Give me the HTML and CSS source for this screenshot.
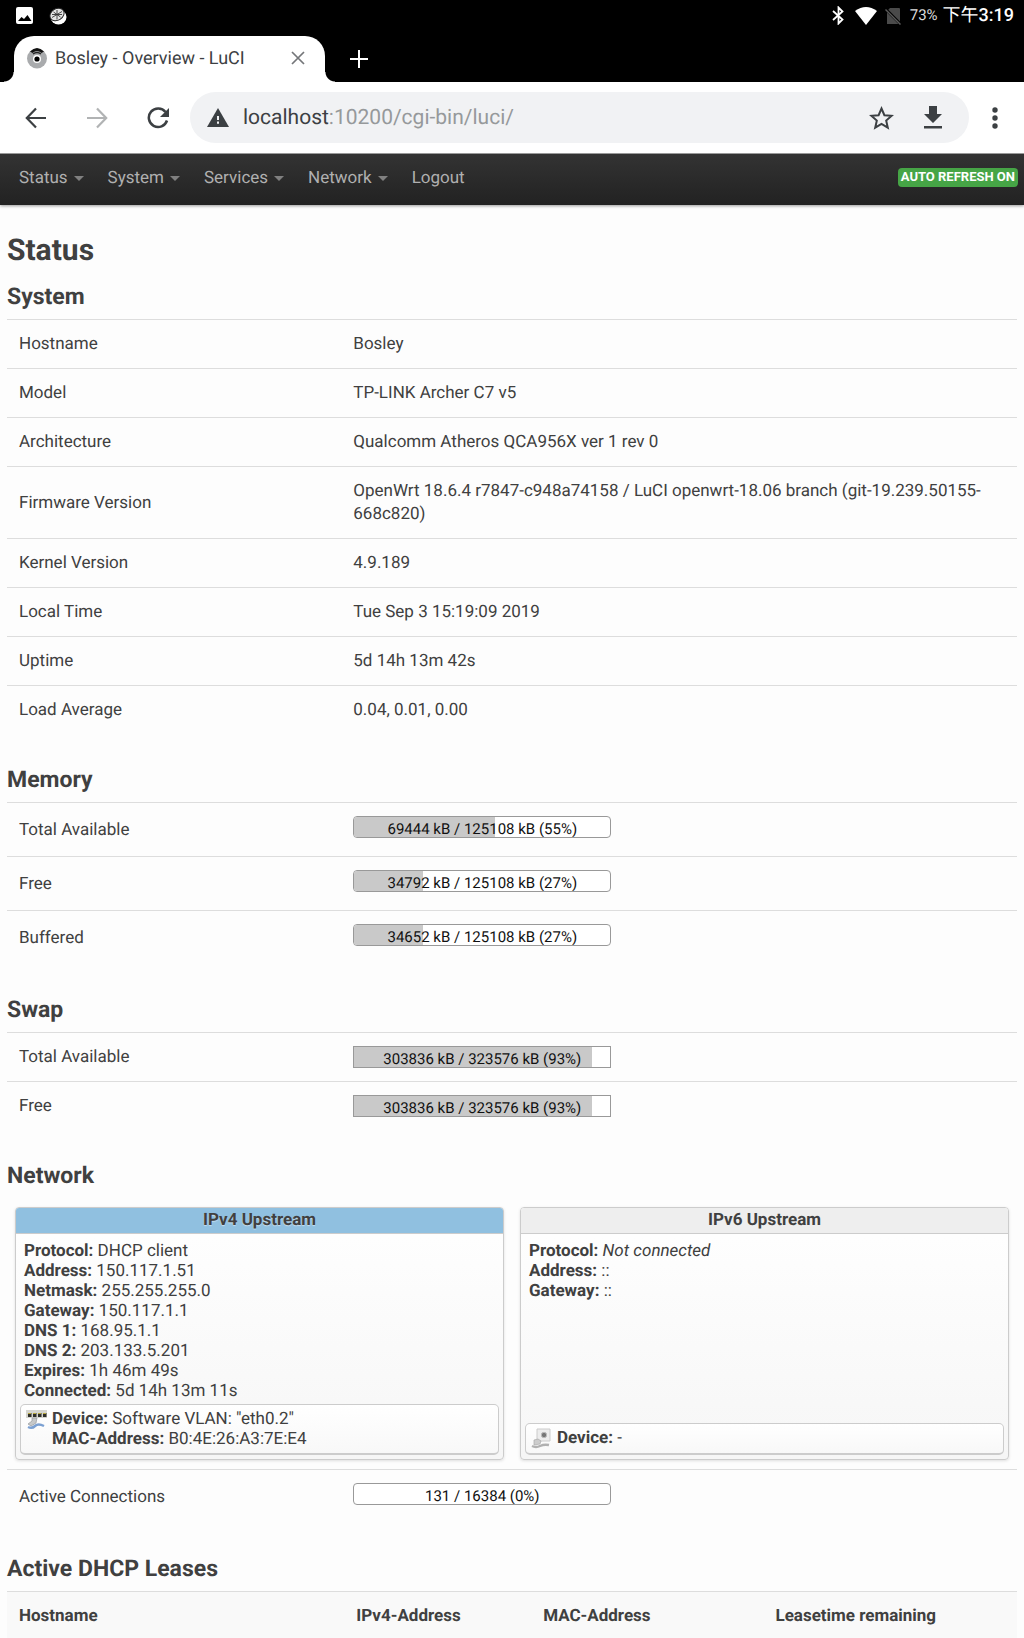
FILE: index.html
```html
<!DOCTYPE html>
<html lang="en">
<head>
<meta charset="utf-8">
<meta name="viewport" content="width=device-width, initial-scale=1">
<title>Bosley - Overview - LuCI</title>
<link rel="stylesheet" href="styles.css">
</head>
<body>
<div class="status-bar">
  <div class="status-group">
    <svg width="17" height="17" viewBox="0 0 17 17" aria-hidden="true"><rect width="17" height="17" rx="2" fill="#fff"/><path d="M2 14l3.500-4 2.500 2 3.500-4 4 6z" fill="#000"/></svg>
    <svg width="18" height="18" viewBox="0 0 18 18" aria-hidden="true"><ellipse cx="9.500" cy="10" rx="8" ry="7.500" fill="#fff"/><ellipse cx="8" cy="7.500" rx="7.500" ry="5.800" transform="rotate(-32 8 7.500)" fill="#e4e4e4" stroke="#222" stroke-width="1"/><path d="M3 10.500l10-6M4.500 5l7 5M8 3v9.500M3 7.500h10" stroke="#333" stroke-width=".9"/></svg>
  </div>
  <div class="status-group status-right">
    <svg width="12" height="19" viewBox="0 0 12 19" fill="none" stroke="#fff" stroke-width="1.800" aria-hidden="true"><path d="M1 5l9.500 8.500L6.500 17.500V1.500l4 4L1 14"/></svg>
    <svg class="wifi" width="22" height="18" viewBox="0 0 22 18" aria-hidden="true"><path d="M0 4Q11-4 22 4L11 18z" fill="#fff"/></svg>
    <svg class="sim" width="17" height="18" viewBox="0 0 17 18" aria-hidden="true"><path d="M5 1h9q1 0 1 1v15H2V4z" fill="#4a4a4a"/><path d="M0 1.500l16 16" stroke="#000" stroke-width="3"/><path d="M.5 2.500l15 15" stroke="#5a5a5a" stroke-width="1.500"/></svg>
    <span class="battery">73%</span>
    <span class="clock">下午<b>3:19</b></span>
  </div>
</div>

<div class="tab-strip">
  <div class="tab">
    <svg width="20" height="22" viewBox="0 0 20 22" aria-hidden="true"><circle cx="10" cy="11.500" r="10" fill="#a9abad"/><path d="M3 4.500Q10-2.500 17 4.500L14.500 6Q10 2 5.500 6z" fill="#111"/><path d="M6 7Q10 4 14 7" stroke="#222" stroke-width="1.500" fill="none"/><circle cx="10" cy="12" r="4" fill="#fff"/><circle cx="10" cy="12" r="2.600" fill="#000"/></svg>
    <span class="tab-title">Bosley - Overview - LuCI</span>
    <button class="icon-button" aria-label="Close tab"><svg width="14" height="14" viewBox="0 0 14 14" stroke="#747679" stroke-width="1.700"><path d="M1 1l12 12M13 1L1 13"/></svg></button>
  </div>
  <button class="icon-button new-tab" aria-label="New tab"><svg width="18" height="18" viewBox="0 0 18 18" stroke="#fff" stroke-width="2"><path d="M9 0v18M0 9h18"/></svg></button>
</div>

<div class="toolbar">
  <button class="icon-button" aria-label="Back"><svg width="22" height="22" viewBox="0 0 22 22" fill="none" stroke="#3c4043" stroke-width="2.200"><path d="M21 11H2M11 1.500L1.800 11l9.200 9.500"/></svg></button>
  <button class="icon-button" aria-label="Forward" disabled><svg width="22" height="22" viewBox="0 0 22 22" fill="none" stroke="#b1b3b4" stroke-width="2.200"><path d="M1 11h19M11 1.500l9.200 9.500-9.200 9.500"/></svg></button>
  <button class="icon-button" aria-label="Reload"><svg width="22" height="22" viewBox="0 0 22 22"><path d="M18.500 5A9.300 9.300 0 1 0 20 13.500" fill="none" stroke="#3c4043" stroke-width="2.500"/><path d="M22 1v9h-9z" fill="#3c4043"/></svg></button>
  <div class="address-bar">
    <svg width="22" height="20" viewBox="0 0 22 20" aria-hidden="true"><path d="M11 0l11 19H0z" fill="#3c4043"/><path d="M11 8v4M11 13.500v2.200" stroke="#f1f2f4" stroke-width="2"/></svg>
    <span class="url" role="textbox" tabindex="0" aria-label="Address">localhost<span class="url-path">:10200/cgi-bin/luci/</span></span>
    <button class="icon-button" aria-label="Bookmark"><svg width="25" height="24" viewBox="0 0 25 24" fill="none" stroke="#3c4043" stroke-width="2"><path d="M12.500 2.500l2.900 6.700 7.300.6-5.500 4.800 1.600 7.100-6.300-3.800-6.300 3.800 1.600-7.100-5.500-4.800 7.300-.6z"/></svg></button>
    <button class="icon-button download" aria-label="Download"><svg width="18" height="23" viewBox="0 0 18 23" fill="#3c4043"><path d="M5 0h8v8h5l-9 9-9-9h5zM0 20h18v2.500H0z"/></svg></button>
  </div>
  <button class="icon-button" aria-label="More options"><svg width="6" height="22" viewBox="0 0 6 22" fill="#3c4043"><circle cx="3" cy="3" r="2.700"/><circle cx="3" cy="11" r="2.700"/><circle cx="3" cy="19" r="2.700"/></svg></button>
</div>

<div class="page">
  <header class="site-header">
    <nav class="menu">
      <a class="has-menu" href="#">Status</a>
      <a class="has-menu" href="#">System</a>
      <a class="has-menu" href="#">Services</a>
      <a class="has-menu" href="#">Network</a>
      <a href="#">Logout</a>
    </nav>
    <button class="refresh-badge">AUTO REFRESH ON</button>
  </header>

  <main class="content">
    <h1>Status</h1>

    <section>
      <h2>System</h2>
      <table class="info">
        <tr><th scope="row">Hostname</th><td>Bosley</td></tr>
        <tr><th scope="row">Model</th><td>TP-LINK Archer C7 v5</td></tr>
        <tr><th scope="row">Architecture</th><td>Qualcomm Atheros QCA956X ver 1 rev 0</td></tr>
        <tr><th scope="row">Firmware Version</th><td>OpenWrt 18.6.4 r7847-c948a74158 / LuCI openwrt-18.06 branch (git-19.239.50155-668c820)</td></tr>
        <tr><th scope="row">Kernel Version</th><td>4.9.189</td></tr>
        <tr><th scope="row">Local Time</th><td>Tue Sep 3 15:19:09 2019</td></tr>
        <tr><th scope="row">Uptime</th><td>5d 14h 13m 42s</td></tr>
        <tr><th scope="row">Load Average</th><td>0.04, 0.01, 0.00</td></tr>
      </table>
    </section>

    <section>
      <h2>Memory</h2>
      <table class="info roomy">
        <tr><th scope="row">Total Available</th><td><div class="bar"><div class="bar-fill" style="width:55%"></div><span class="bar-text">69444 kB / 125108 kB (55%)</span></div></td></tr>
        <tr><th scope="row">Free</th><td><div class="bar"><div class="bar-fill" style="width:27%"></div><span class="bar-text">34792 kB / 125108 kB (27%)</span></div></td></tr>
        <tr><th scope="row">Buffered</th><td><div class="bar"><div class="bar-fill" style="width:27%"></div><span class="bar-text">34652 kB / 125108 kB (27%)</span></div></td></tr>
      </table>
    </section>

    <section>
      <h2>Swap</h2>
      <table class="info swap">
        <tr><th scope="row">Total Available</th><td><div class="bar"><div class="bar-fill" style="width:93%"></div><span class="bar-text">303836 kB / 323576 kB (93%)</span></div></td></tr>
        <tr><th scope="row">Free</th><td><div class="bar"><div class="bar-fill" style="width:93%"></div><span class="bar-text">303836 kB / 323576 kB (93%)</span></div></td></tr>
      </table>
    </section>

    <section>
      <h2>Network</h2>
      <div class="upstreams">
        <article class="upstream active">
          <h3>IPv4 Upstream</h3>
          <div class="details">
            <div><b>Protocol:</b> DHCP client</div>
            <div><b>Address:</b> 150.117.1.51</div>
            <div><b>Netmask:</b> 255.255.255.0</div>
            <div><b>Gateway:</b> 150.117.1.1</div>
            <div><b>DNS 1:</b> 168.95.1.1</div>
            <div><b>DNS 2:</b> 203.133.5.201</div>
            <div><b>Expires:</b> 1h 46m 49s</div>
            <div><b>Connected:</b> 5d 14h 13m 11s</div>
          </div>
          <div class="device">
            <svg width="21" height="21" viewBox="0 0 21 21" aria-hidden="true"><path d="M0 1h21v8H0z" fill="#d5d5cf"/><path d="M2 4h3.500v4H2zM7 4h3.500v4H7zM12 4h3.500v4H12zM17 4h3.500v4H17z" fill="#30302a"/><path d="M2 4.500h3M7 4.500h3M12 4.500h3M17 4.500h3" stroke="#b7a63c" stroke-width="1.200"/><path d="M6 9h5l-1 5-5 3-3-2 4-3z" fill="#c6c8c9" stroke="#96999b" stroke-width=".7"/><path d="M2 18q4 2 7-1t9 0" fill="none" stroke="#7ba0d2" stroke-width="2.500"/></svg>
            <div>
              <div><b>Device:</b> Software VLAN: "eth0.2"</div>
              <div><b>MAC-Address:</b> B0:4E:26:A3:7E:E4</div>
            </div>
          </div>
        </article>
        <article class="upstream">
          <h3>IPv6 Upstream</h3>
          <div class="details">
            <div><b>Protocol:</b> <em>Not connected</em></div>
            <div><b>Address:</b> ::</div>
            <div><b>Gateway:</b> ::</div>
          </div>
          <div class="device">
            <svg width="21" height="21" viewBox="0 0 21 21" aria-hidden="true"><path d="M6 1h13v12H6z" fill="#ededed" stroke="#ccc"/><circle cx="13" cy="7" r="2.700" fill="#777" stroke="#bbb"/><path d="M3 12l4-1 3 2-1 3-6 1z" fill="#ccc" stroke="#aaa" stroke-width=".7"/><path d="M1 18q4 2 8 0t9-1" fill="none" stroke="#b0b0b0" stroke-width="2.500"/></svg>
            <div><b>Device:</b> -</div>
          </div>
        </article>
      </div>
      <table class="info roomy">
        <tr><th scope="row">Active Connections</th><td><div class="bar"><div class="bar-fill" style="width:0%"></div><span class="bar-text">131 / 16384 (0%)</span></div></td></tr>
      </table>
    </section>

    <section>
      <h2>Active DHCP Leases</h2>
      <table class="leases">
        <thead><tr><th scope="col">Hostname</th><th scope="col">IPv4-Address</th><th scope="col">MAC-Address</th><th scope="col">Leasetime remaining</th></tr></thead>
      </table>
    </section>
  </main>
</div>
</body>
</html>
```

FILE: styles.css
```css
* { box-sizing: border-box; }

body {
  margin: 0;
  height: 100vh;
  display: flex;
  flex-direction: column;
  font: 17px/23px Roboto, "Noto Sans CJK TC", sans-serif;
  text-rendering: geometricPrecision;
  color: #404040;
  background: #fdfdfd;
}

svg { display: block; flex: none; }

.icon-button {
  display: flex;
  padding: 0;
  border: 0;
  background: none;
}

/* Device status bar */
.status-bar {
  display: flex;
  justify-content: space-between;
  align-items: center;
  height: 31px;
  flex: none;
  padding: 0 10px 0 16px;
  background: #000;
  color: #fff;
}
.status-group { display: flex; align-items: center; gap: 16px; }
.status-right { gap: 8px; }
.wifi { margin-left: 3px; }
.battery { font-size: 15px; color: #ddd; }
.clock { font-size: 18px; margin-left: -3px; }
.clock b { font-weight: 500; }

/* Tabs */
.tab-strip {
  display: flex;
  align-items: center;
  flex: none;
  height: 51px;
  padding: 5px 14px 0;
  background: #000;
}
.tab {
  position: relative;
  display: flex;
  align-items: center;
  gap: 8px;
  width: 311px;
  height: 46px;
  padding: 0 20px 2px 13px;
  border-radius: 20px 20px 0 0;
  background: #fff;
}
.tab::before,
.tab::after {
  content: "";
  position: absolute;
  bottom: 0;
  width: 10px;
  height: 10px;
}
.tab::before { right: 100%; background: radial-gradient(circle at 0 0, #000 9px, #fff 10px); }
.tab::after { left: 100%; background: radial-gradient(circle at 100% 0, #000 9px, #fff 10px); }
.tab-title { flex: 1; font-size: 18px; color: #3c4043; }
.new-tab { margin-left: 25px; }

/* Browser toolbar */
.toolbar {
  display: flex;
  align-items: center;
  flex: none;
  gap: 39px;
  height: 72px;
  padding: 0 26px 0 25px;
  border-bottom: 1px solid #999;
  background: #fff;
}
.address-bar {
  display: flex;
  align-items: center;
  flex: 1;
  height: 51px;
  margin: 0 -16px 0 -18px;
  padding: 0 27px 0 17px;
  border-radius: 26px;
  background: #f1f2f4;
}
.url { flex: 1; margin-left: 14px; font-size: 21px; line-height: 28px; color: #3c4043; }
.url-path { color: #96999b; }
.download { margin-left: 30px; }

/* Router page */
.page { flex: 1; min-height: 0; overflow-y: auto; scrollbar-width: none; }
.site-header {
  display: flex;
  justify-content: space-between;
  align-items: center;
  height: 51px;
  padding: 0 6px 2px 7px;
  background: linear-gradient(#333, #222);
  box-shadow: 0 1px 3px rgba(0, 0, 0, .4);
}
.menu { display: flex; }
.menu a {
  display: flex;
  align-items: center;
  gap: 6px;
  padding: 0 12px;
  color: #b0b0b0;
  text-decoration: none;
}
.has-menu::after {
  content: "";
  border: 5px solid transparent;
  border-top-color: #808080;
  border-bottom: 0;
}
.refresh-badge {
  padding: 0 3px 1px;
  margin-bottom: 2px;
  border: 0;
  border-radius: 4px;
  background: #46a546;
  color: #fff;
  font: bold 13px/18px Roboto, sans-serif;
}

.content { padding: 22px 7px 0; }
h1 { margin: 0; font-size: 30px; line-height: 48px; }
h2 { margin: 0; font-size: 23px; line-height: 44px; }
section + section { margin-top: 24px; }

table { width: 100%; border-collapse: separate; border-spacing: 0; }
th { text-align: left; }
.info th,
.info td {
  padding: 13px 12px 12px;
  border-top: 1px solid #ddd;
  vertical-align: middle;
}
.info th { width: 33%; font-weight: normal; }
.info td { padding-left: 13px; }
.info.roomy td { padding-bottom: 18px; }
.swap td { vertical-align: top; }

.bar {
  position: relative;
  width: 258px;
  height: 22px;
  border: 1px solid #999;
  border-radius: 4px;
  background: #fff;
  overflow: hidden;
}
.swap .bar { border-radius: 0; }
.bar-fill { height: 100%; background: #c9c9c9; }
.bar-text {
  position: absolute;
  inset: 1px 0 0;
  text-align: center;
  font-size: 15px;
  line-height: 22px;
  color: #111;
}

/* Upstream cards */
.upstreams {
  display: grid;
  grid-template-columns: 1fr 1fr;
  gap: 16px;
  padding: 9px 8px;
  line-height: 20px;
}
.upstream {
  display: flex;
  flex-direction: column;
  border: 1px solid #ccc;
  border-radius: 4px;
  background: linear-gradient(#fff, #f6f6f6);
  box-shadow: 0 1px 3px rgba(0, 0, 0, .12);
}
.upstream h3 {
  margin: 0;
  padding: 2px 0 3px;
  border-bottom: 1px solid #ccc;
  border-radius: 3px 3px 0 0;
  background: #eee;
  font-size: 17px;
  line-height: 20px;
  text-align: center;
}
.active h3 { background: #90c0e0; text-shadow: 0 1px 1px rgba(255, 255, 255, .5); }
.details { flex: 1; padding: 7px 8px 3px; }
.device {
  display: flex;
  gap: 5px;
  margin: 0 4px 4px;
  padding: 4px 5px;
  border: 1px solid #ccc;
  border-bottom-width: 2px;
  border-radius: 5px;
  background: linear-gradient(#fff, #f8f8f8);
}

.leases th { padding: 13px 12px 12px; border-top: 1px solid #ddd; background: #f9f9f9; }
.leases th + th { padding-left: 16px; }
.leases th:nth-child(1) { width: 33%; }
.leases th:nth-child(2) { width: 18.5%; }
.leases th:nth-child(3) { width: 23%; }
```
